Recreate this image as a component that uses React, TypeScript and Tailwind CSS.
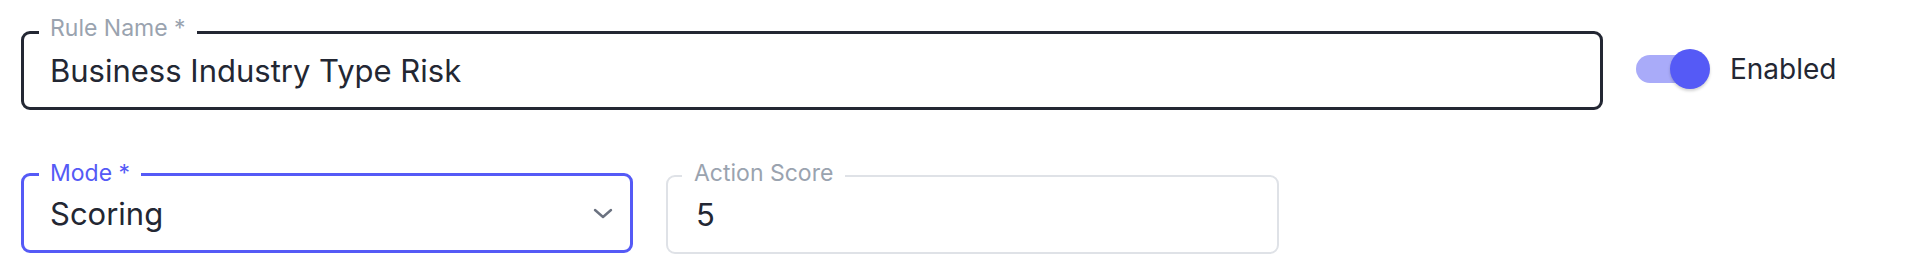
export default function App() {
  return (
    <div className="w-[1924px] h-[278px] bg-white pl-[21px] pt-[31px] font-['Inter',sans-serif]">
      <div className="flex items-center">
        <div className="relative w-[1582px]">
          <div className="h-[79px] border-[3px] border-[#232733] rounded-[9px] flex items-center pl-[26px] text-[31px] text-[#232733] leading-none">
            Business Industry Type Risk
          </div>
          <span className="absolute left-[18px] top-[-14px] bg-white px-[11px] text-[23px] leading-[23px] text-[#9aa3af]">
            Rule Name *
          </span>
        </div>
        <div className="flex items-center ml-[33px] mb-[4px]">
          <div className="relative w-[68px] h-[28px] rounded-full bg-[#a9abf9]">
            <div className="absolute left-[34px] top-[-6px] w-[40px] h-[40px] rounded-full bg-[#555af6] shadow-[0_2px_3px_rgba(0,0,0,0.18)]" />
          </div>
          <span className="ml-[26px] text-[28px] leading-none text-[#232733]">Enabled</span>
        </div>
      </div>
      <div className="grid grid-cols-[612px_613px] gap-[33px] items-start mt-[63px]">
        <div className="relative">
          <div className="h-[80px] border-[3px] border-[#555af6] rounded-[9px] flex items-center justify-between pl-[26px] pr-[17px] text-[31px] text-[#232733] leading-none">
            <span>Scoring</span>
            <svg width="20" height="11" viewBox="0 0 20 11" fill="none">
              <polyline points="2,2 10,9 18,2" stroke="#6b7280" strokeWidth="2.4" strokeLinecap="round" strokeLinejoin="round" />
            </svg>
          </div>
          <span className="absolute left-[18px] top-[-11px] bg-white px-[11px] text-[23px] leading-[23px] text-[#555af6]">
            Mode *
          </span>
        </div>
        <div className="relative mt-[2px]">
          <div className="h-[79px] border-2 border-[#dfe2e7] rounded-[9px] flex items-center pl-[28px] text-[31px] text-[#232733] leading-none">
            5
          </div>
          <span className="absolute left-[16px] top-[-13px] bg-white px-[12px] text-[23px] leading-[23px] text-[#9aa3af]">
            Action Score
          </span>
        </div>
      </div>
    </div>
  );
}
